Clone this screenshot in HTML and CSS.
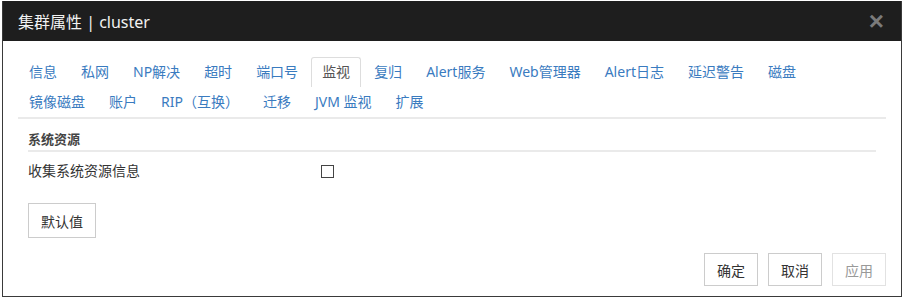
FILE: index.html
```html
<!DOCTYPE html>
<html lang="zh-CN">
<head>
  <meta charset="UTF-8">
  <meta name="viewport" content="width=device-width, initial-scale=1.0">
  <title>集群属性</title>
  <link rel="stylesheet" href="styles.css">
</head>
<body>
  <div class="dialog">
    <div class="header">
      <span class="title">集群属性 | cluster</span>
      <span class="close">&times;</span>
    </div>
    <div class="body">
      <ul class="tabs">
        <li><a>信息</a></li>
        <li><a>私网</a></li>
        <li><a>NP解决</a></li>
        <li><a>超时</a></li>
        <li><a>端口号</a></li>
        <li class="active"><a>监视</a></li>
        <li><a>复归</a></li>
        <li><a>Alert服务</a></li>
        <li><a>Web管理器</a></li>
        <li><a>Alert日志</a></li>
        <li><a>延迟警告</a></li>
        <li><a>磁盘</a></li>
        <li><a>镜像磁盘</a></li>
        <li><a>账户</a></li>
        <li><a>RIP（互换）</a></li>
        <li><a>迁移</a></li>
        <li><a>JVM 监视</a></li>
        <li><a>扩展</a></li>
      </ul>
      <div class="panel">
        <div class="section-title">系统资源</div>
        <div class="row">
          <label class="row-label">收集系统资源信息</label>
          <input class="check" type="checkbox">
        </div>
        <button class="btn btn-default">默认值</button>
      </div>
    </div>
    <div class="footer">
      <button class="btn">确定</button>
      <button class="btn">取消</button>
      <button class="btn disabled">应用</button>
    </div>
  </div>
</body>
</html>
```

FILE: styles.css
```css
html, body{
  margin: 0;
  padding: 0;
  background-color: #fff;
  font-family: "Noto Sans", "Noto Sans CJK SC", sans-serif;
  font-size: 14px;
  color: #333;
}

.dialog{
  margin: 1px 2px 0;
  width: 898px;
  height: 295px;
  border: 1px solid #3a3a3a;
  border-top: 0;
  display: flex;
  flex-direction: column;
}
.header{
  height: 40px;
  background-color: #1e1e1e;
  display: flex;
  align-items: center;
  justify-content: space-between;
  padding: 0 17px 0 15px;
}
.title{
  color: #f2f2f2;
  font-size: 16px;
}
.close{
  color: #7a7a7a;
  font-size: 26px;
  font-weight: bold;
  font-family: "Liberation Sans", sans-serif;
  line-height: 1;
}

.body{
  padding: 16px 15px 0;
  flex: 1;
}
.tabs{
  list-style: none;
  margin: 0;
  padding: 0;
  display: flex;
  flex-wrap: wrap;
  border-bottom: 2px solid #eaeaea;
}
.tabs li{
  margin-right: 2px;
}
.tabs a{
  display: block;
  padding: 4px 10px 5px;
  line-height: 20px;
  color: #3a7bbf;
  border: 1px solid transparent;
  border-bottom: 0;
  border-radius: 3px 3px 0 0;
  cursor: pointer;
}
.tabs .active a{
  color: #555;
  border-color: #ddd;
  background-color: #fff;
}

.panel{
  padding: 10px 10px 0;
}
.section-title{
  font-size: 13px;
  font-weight: bold;
  color: #444;
  line-height: 20px;
  padding-bottom: 1px;
  border-bottom: 2px solid #eaeaea;
}
.row{
  display: flex;
  align-items: center;
  margin-top: 9px;
  line-height: 20px;
}
.row-label{
  width: 293px;
}
.check{
  -webkit-appearance: none;
  appearance: none;
  margin: 0;
  width: 13px;
  height: 13px;
  border: 1px solid #444;
  background-color: #fff;
  box-sizing: border-box;
}

.btn{
  font-family: "Noto Sans", "Noto Sans CJK SC", sans-serif;
  font-size: 14px;
  color: #333;
  background-color: #fff;
  border: 1px solid #ccc;
  padding: 0;
  width: 54px;
  height: 33px;
  cursor: pointer;
}
.btn-default{
  margin-top: 22px;
  width: 68px;
  height: 35px;
}
.btn.disabled{
  color: #999;
  border-color: #e2e2e2;
  cursor: default;
}

.footer{
  display: flex;
  justify-content: flex-end;
  gap: 10px;
  padding: 0 15px 10px;
}
```
